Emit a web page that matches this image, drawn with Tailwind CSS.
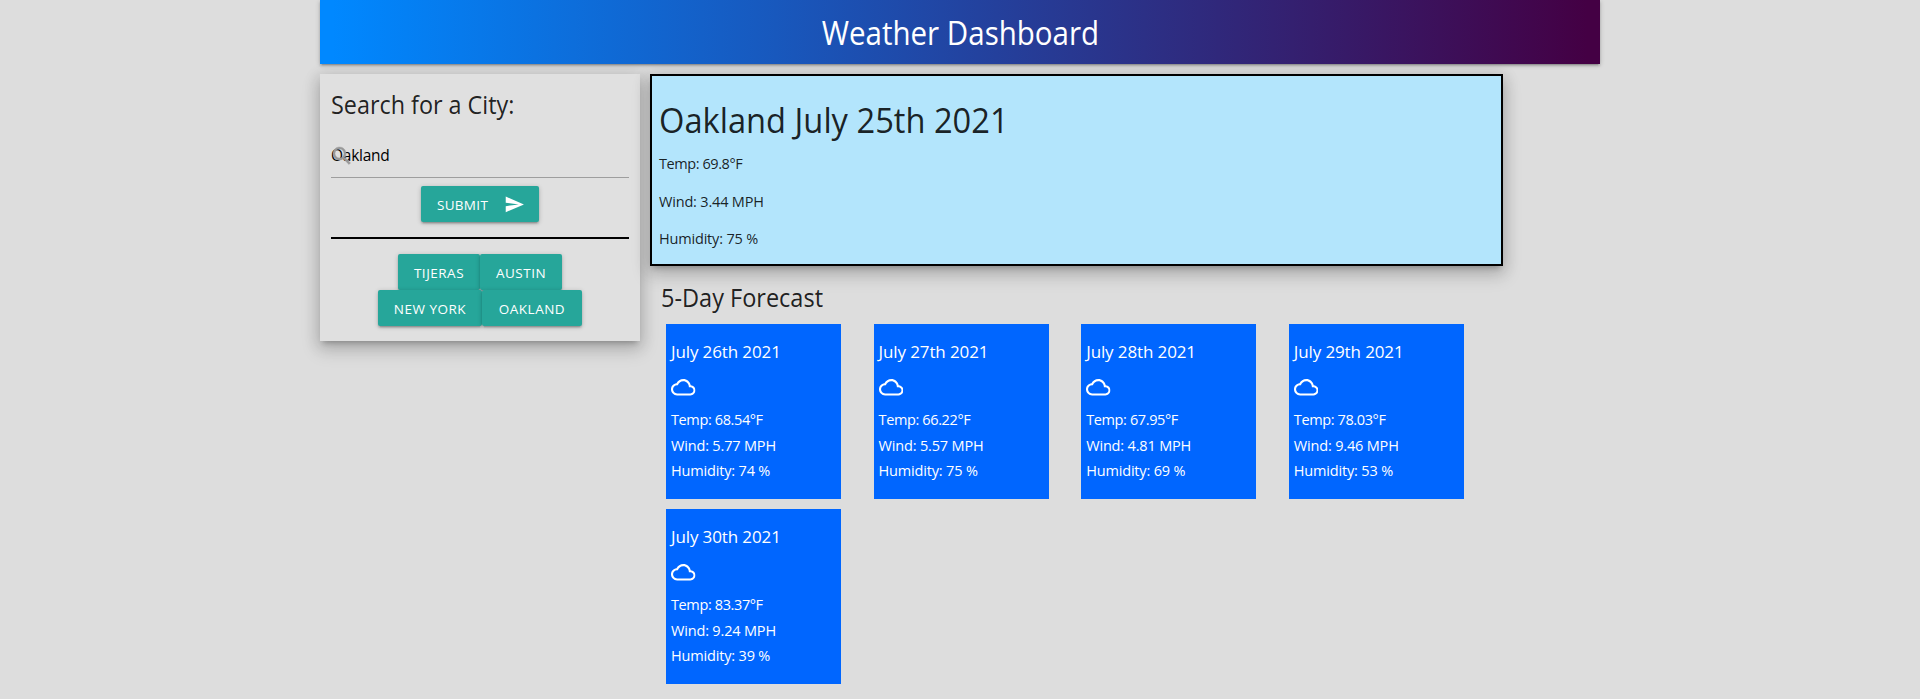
<!DOCTYPE html>
<html lang="en">
<head>
<meta charset="utf-8">
<title>Weather Dashboard</title>
<script src="https://cdn.jsdelivr.net/npm/@tailwindcss/browser@4"></script>
</head>
<body class="h-[699px] overflow-hidden bg-[#dddddd] text-black/87">
<svg class="hidden">
  <symbol id="cloud" viewBox="0 0 24 24"><path d="M19.35 10.04C18.67 6.59 15.64 4 12 4 9.11 4 6.6 5.64 5.35 8.04 2.34 8.36 0 10.91 0 14c0 3.31 2.69 6 6 6h13c2.76 0 5-2.24 5-5 0-2.64-2.05-4.78-4.65-4.96zM19 18H6c-2.21 0-4-1.79-4-4s1.79-4 4-4h.71C7.37 7.69 9.48 6 12 6c3.04 0 5.5 2.46 5.5 5.5v.5H19c1.66 0 3 1.34 3 3s-1.34 3-3 3z"/></symbol>
</svg>
<div class="mx-auto w-[1280px] font-['Open_Sans',sans-serif]">
  <nav class="relative z-10 flex h-16 items-center justify-center bg-[linear-gradient(90deg,#0088ff_1%,#440044_99%)] pt-0.5 text-white shadow-[0_2px_2px_0_rgba(0,0,0,0.14),0_3px_1px_-2px_rgba(0,0,0,0.12),0_1px_5px_0_rgba(0,0,0,0.2)]">
    <h1 class="scale-x-[0.922] text-[32px] leading-12">Weather Dashboard</h1>
  </nav>
  <div class="flex items-start gap-2.5 pt-2.5">
    <aside class="h-[267px] w-[320px] bg-[#e0e0e0] px-[11px] pt-[14px] shadow-[0_8px_17px_2px_rgba(0,0,0,0.14),0_3px_14px_2px_rgba(0,0,0,0.12),0_5px_5px_-3px_rgba(0,0,0,0.2)]">
      <h2 class="origin-left scale-x-[0.916] text-[25.5px] leading-8 whitespace-nowrap">Search for a City:</h2>
      <div class="relative mt-[14px] h-[44px] border-b border-[#9e9e9e]">
        <span class="block text-[15.5px] leading-[43px] tracking-[-0.25px] text-black">Oakland</span>
        <svg class="absolute top-[10px] -left-px size-6 fill-[#999999] stroke-[#999999] stroke-[0.4]" viewBox="0 0 24 24"><path d="M15.5 14h-.79l-.28-.27C15.41 12.59 16 11.11 16 9.5 16 5.91 13.09 3 9.5 3S3 5.91 3 9.5 5.91 16 9.5 16c1.61 0 3.09-.59 4.23-1.57l.27.28v.79l5 4.99L20.49 19l-4.99-5zm-6 0C7.01 14 5 11.99 5 9.5S7.01 5 9.5 5 14 7.01 14 9.5 11.99 14 9.5 14z"/></svg>
      </div>
      <button class="mx-auto mt-2 flex h-9 w-[118px] items-center justify-between rounded-xs bg-[#26a69a] pr-[14.5px] pl-4 text-[13.5px] tracking-[0.3px] text-white shadow-[0_2px_2px_0_rgba(0,0,0,0.14),0_3px_1px_-2px_rgba(0,0,0,0.12),0_1px_5px_0_rgba(0,0,0,0.2)]"><span class="pt-0.5">SUBMIT</span><svg class="size-[20.8px] fill-white" viewBox="0 0 24 24"><path d="M2.01 21L23 12 2.01 3 2 10l15 2-15 2z"/></svg></button>
      <hr class="mt-[15px] border-t-2 border-black">
      <div class="mt-[15px] flex flex-wrap justify-center text-[13.5px] tracking-[0.5px] text-white [&>button]:h-9 [&>button]:rounded-xs [&>button]:bg-[#26a69a] [&>button]:pt-0.5 [&>button]:shadow-[0_2px_2px_0_rgba(0,0,0,0.14),0_3px_1px_-2px_rgba(0,0,0,0.12),0_1px_5px_0_rgba(0,0,0,0.2)]">
        <button class="ml-10 w-[82px]">TIJERAS</button><button class="mr-10 w-[82px]">AUSTIN</button>
        <button class="w-[104px]">NEW YORK</button><button class="w-[100px]">OAKLAND</button>
      </div>
    </aside>
    <main class="w-[853px]">
      <section class="h-[192px] border-2 border-black bg-[#b3e5fc] px-[7px] pt-5 shadow-[0_8px_17px_2px_rgba(0,0,0,0.14),0_3px_14px_2px_rgba(0,0,0,0.12),0_5px_5px_-3px_rgba(0,0,0,0.2)]">
        <h2 class="origin-left scale-x-[0.933] text-[35px] leading-12 whitespace-nowrap">Oakland July 25th 2021</h2>
        <div class="mt-px text-[14.5px] leading-[37.5px] tracking-[-0.18px]">
          <p class="tracking-[-0.42px]">Temp: 69.8°F</p>
          <p>Wind: 3.44 MPH</p>
          <p>Humidity: 75 %</p>
        </div>
      </section>
      <h2 class="mt-[15px] ml-[11px] origin-left scale-x-[0.922] text-[25.5px] leading-8 whitespace-nowrap">5-Day Forecast</h2>
      <div id="days" class="mt-[11px] ml-4 grid grid-cols-[repeat(4,175px)] gap-x-[32.6px] gap-y-2.5"></div>
    </main>
  </div>
</div>
<script>
var days = [
  ['July 26th 2021', '68.54', '5.77', '74'],
  ['July 27th 2021', '66.22', '5.57', '75'],
  ['July 28th 2021', '67.95', '4.81', '69'],
  ['July 29th 2021', '78.03', '9.46', '53'],
  ['July 30th 2021', '83.37', '9.24', '39']
];
document.getElementById('days').innerHTML = days.map(function (d) {
  return '<article class="h-[175px] bg-[#0066ff] px-[5px] pt-4 text-white">' +
    '<h3 class="text-[17px] leading-6 tracking-[-0.12px]">' + d[0] + '</h3>' +
    '<svg class="mt-[11px] block size-[24.5px] fill-white"><use href="#cloud"/></svg>' +
    '<div class="mt-[7.5px] text-[14.5px] leading-[25.6px] tracking-[-0.17px]">' +
    '<p class="tracking-[-0.38px]">Temp: ' + d[1] + '°F</p><p>Wind: ' + d[2] + ' MPH</p><p>Humidity: ' + d[3] + ' %</p></div></article>';
}).join('');
</script>
</body>
</html>
